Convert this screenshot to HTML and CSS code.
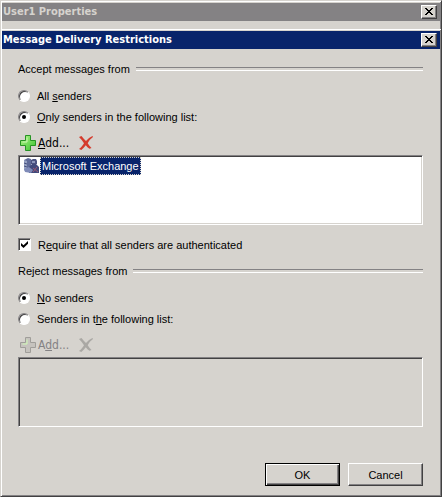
FILE: index.html
```html
<!DOCTYPE html>
<html lang="en">
<head>
    <meta charset="UTF-8">
    <meta name="viewport" content="width=device-width, initial-scale=1.0">
    <title>Message Delivery Restrictions</title>
    <link rel="stylesheet" href="styles.css">
</head>
<body>
    <!-- shared icons -->
    <svg class="icon-defs" width="0" height="0" aria-hidden="true">
        <linearGradient id="green" x1="0" y1="0" x2="1" y2="1">
            <stop offset="0" stop-color="#b4f58c"/>
            <stop offset="1" stop-color="#35c22c"/>
        </linearGradient>
        <symbol id="plus" viewBox="0 0 16 16">
            <path d="M5.5 .5h5v5h5v5h-5v5h-5v-5h-5v-5h5z" stroke-linejoin="round"/>
            <path d="M7 2.5v4.500h-4.500" class="plus-shine"/>
        </symbol>
        <symbol id="cross" viewBox="0 0 16 16">
            <path d="M1 2L3.500 1C5 3 6.500 4.500 8 6C10 3.800 12 2 14.500 1L15 2C12.500 3.800 11 5.700 9.700 8.200C10.800 10 12 11.600 13.500 13L11.500 13.800C10 12.700 8.800 11.500 7.800 10.200C6.500 12 5 13.500 3.300 15L1 14C3.300 12.200 4.800 10.300 6 8.200C4.600 6 3 4 1 2Z"/>
        </symbol>
    </svg>

    <div class="window">
        <div class="title-bar inactive">
            <span>User1 Properties</span>
            <button type="button" class="close" aria-label="Close User1 Properties">
                <svg width="8" height="7" viewBox="0 0 8 7" shape-rendering="crispEdges"><path d="M0 0h2v1h1v1h2v-1h1v-1h2v1h-1v1h-1v1h-1v1h1v1h1v1h1v1h-2v-1h-1v-1h-2v1h-1v1h-2v-1h1v-1h1v-1h1v-1h-1v-1h-1v-1h-1z"/></svg>
            </button>
        </div>
    </div>

    <form class="window dialog">
        <div class="title-bar">
            <span>Message Delivery Restrictions</span>
            <button type="button" class="close" aria-label="Close">
                <svg width="8" height="7" viewBox="0 0 8 7" shape-rendering="crispEdges"><path d="M0 0h2v1h1v1h2v-1h1v-1h2v1h-1v1h-1v1h-1v1h1v1h1v1h1v1h-2v-1h-1v-1h-2v1h-1v1h-2v-1h1v-1h1v-1h1v-1h-1v-1h-1v-1h-1z"/></svg>
            </button>
        </div>

        <div class="content">
            <fieldset>
                <legend>Accept messages from</legend>
                <label class="option"><input type="radio" name="accept"><span>All <u>s</u>enders</span></label>
                <label class="option"><input type="radio" name="accept" checked><span><u>O</u>nly senders in the following list:</span></label>
                <div class="toolbar">
                    <button type="button" class="tool add"><svg width="16" height="16"><use href="#plus"/></svg><span><u>A</u>dd...</span></button>
                    <button type="button" class="tool remove" aria-label="Remove"><svg width="16" height="16"><use href="#cross"/></svg></button>
                </div>
                <ul class="list">
                    <li>
                        <svg width="16" height="16" viewBox="0 0 16 16">
                            <path d="M1 2l4-2 3 1v11l-3 2-4-2z" fill="#5f6a98"/>
                            <path d="M1 2l3 1v10l-3-1z" fill="#98a3c3"/>
                            <path d="M1 5l3 1M1 8l3 1" stroke="#454f7d"/>
                            <path d="M8 2l2-1h3l1 2v3H8z" fill="#4a5280"/>
                            <path d="M9 3h3v2H9z" fill="#8d97bd"/>
                            <path d="M6 9l3-3h4l3 3v6H6z" fill="#414a7c"/>
                            <path d="M1 11l5-2 4 3-2 3-6-1z" fill="#7f8bb8"/>
                            <path d="M10 10l5 4M14 9l-4 5" stroke="#9a5874"/>
                        </svg>
                        <span class="selected">Microsoft Exchange</span>
                    </li>
                </ul>
            </fieldset>

            <label class="option require"><input type="checkbox" checked><span>R<u>e</u>quire that all senders are authenticated</span></label>

            <fieldset>
                <legend>Reject messages from</legend>
                <label class="option"><input type="radio" name="reject" checked><span><u>N</u>o senders</span></label>
                <label class="option"><input type="radio" name="reject"><span>Senders in t<u>h</u>e following list:</span></label>
                <div class="toolbar">
                    <button type="button" class="tool add" disabled><svg width="16" height="16"><use href="#plus"/></svg><span>A<u>d</u>d...</span></button>
                    <button type="button" class="tool remove" aria-label="Remove" disabled><svg width="16" height="16"><use href="#cross"/></svg></button>
                </div>
                <ul class="list disabled"></ul>
            </fieldset>

            <div class="buttons">
                <button type="submit" class="button default">OK</button>
                <button type="button" class="button">Cancel</button>
            </div>
        </div>
    </form>
</body>
</html>
```

FILE: styles.css
```css
* {
    box-sizing: border-box;
}
body {
    margin: 0;
    background-color: #d6d3ce;
    color: #000;
    font-family: "Liberation Sans", Arial, sans-serif;
    font-size: 11px;
    line-height: 14px;
}
button {
    font: inherit;
    color: inherit;
}
svg {
    display: block;
    flex: none;
}
.icon-defs {
    position: absolute;
}

/* windows */
.window {
    padding: 2px 1px 8px;
    border: 1px solid;
    border-color: #d6d3ce #424142 #424142 #d6d3ce;
    border-bottom: 0;
    box-shadow: inset 1px 1px #fff, inset -1px 0 #848284;
}
.dialog {
    display: flex;
    flex-direction: column;
    min-height: calc(100vh - 29px);
    padding: 2px 1px 0;
    border-top: 0;
    border-bottom: 1px solid #424142;
    box-shadow: inset 1px 1px #fff, inset -1px -1px #848284;
}
.title-bar {
    display: flex;
    align-items: center;
    justify-content: space-between;
    height: 18px;
    padding: 0 3px 0 1px;
    background-color: #08246b;
    color: #fff;
    font-family: "DejaVu Sans Condensed", "DejaVu Sans", Tahoma, sans-serif;
    font-weight: bold;
}
.title-bar.inactive {
    background-color: #848284;
    color: #d6d3ce;
}
.close {
    display: flex;
    align-items: center;
    justify-content: center;
    width: 16px;
    height: 14px;
    padding: 0 1px 1px 0;
    border: 1px solid;
    border-color: #fff #424142 #424142 #fff;
    background-color: #d6d3ce;
    box-shadow: inset -1px -1px #848284;
}

/* dialog content */
.content {
    display: flex;
    flex: 1;
    flex-direction: column;
    padding: 13px 17px 10px 16px;
}
fieldset {
    min-width: 0;
    margin: 0;
    padding: 0;
    border: 0;
}
legend {
    display: flex;
    align-items: center;
    gap: 6px;
    width: 100%;
    margin-bottom: 9px;
    padding: 0;
}
legend::after {
    content: "";
    flex: 1;
    height: 2px;
    border-top: 1px solid #848284;
    border-bottom: 1px solid #fff;
}
.option {
    display: flex;
    align-items: center;
    gap: 7px;
    height: 21px;
}
.option input {
    appearance: none;
    display: grid;
    place-items: center;
    flex: none;
    width: 12px;
    height: 12px;
    margin: 0;
    border: 1px solid;
    border-color: #848284 #fff #fff #848284;
    background-color: #fff;
    box-shadow: inset 1px 1px #424142;
}
.option input[type="radio"] {
    border-radius: 50%;
}
.option input[type="radio"]:checked::before {
    content: "";
    width: 4px;
    height: 4px;
    border-radius: 50%;
    background-color: #000;
}
.option input[type="checkbox"] {
    width: 13px;
    height: 13px;
}
.option input[type="checkbox"]:checked::before {
    content: "";
    width: 7px;
    height: 7px;
    background-color: #000;
    clip-path: polygon(0 29%, 36% 62%, 100% 0, 100% 40%, 36% 100%, 0 68%);
}
.require {
    margin: 9px 0;
}

/* add / remove */
.toolbar {
    display: flex;
    align-items: center;
    gap: 9px;
    height: 28px;
    padding: 4px 2px 0;
}
.tool {
    display: flex;
    align-items: center;
    gap: 2px;
    padding: 0;
    border: 0;
    background: none;
}
.add {
    font-family: "DejaVu Sans Condensed", "DejaVu Sans", Tahoma, sans-serif;
    font-size: 12px;
}
.add svg {
    fill: url(#green);
    stroke: #269323;
}
.plus-shine {
    fill: none;
    stroke: #d0fbb6;
}
.remove svg {
    fill: #d43b2c;
}
.tool:disabled {
    color: #848284;
}
.add:disabled svg {
    fill: #c6c3be;
    stroke: #a09e9a;
}
.add:disabled .plus-shine {
    stroke: #dedbd6;
}
.remove:disabled svg {
    fill: #aaa8a4;
}

/* sender lists */
.list {
    height: 70px;
    margin: 0;
    padding: 1px 4px;
    border: 1px solid;
    border-color: #848284 #fff #fff #848284;
    background-color: #fff;
    box-shadow: inset 1px 1px #424142, inset -1px -1px #d6d3ce;
    list-style: none;
}
.list.disabled {
    background-color: #d6d3ce;
}
.list li {
    display: flex;
    align-items: center;
    gap: 1px;
}
.selected {
    padding: 1px;
    border: 1px dotted #d6d3ce;
    background-color: #08246b;
    color: #fff;
}

/* bottom buttons */
.buttons {
    display: flex;
    justify-content: flex-end;
    gap: 8px;
    margin-top: auto;
}
.button {
    width: 75px;
    height: 23px;
    padding: 0;
    border: 1px solid;
    border-color: #fff #424142 #424142 #fff;
    background-color: #d6d3ce;
    box-shadow: inset -1px -1px #848284;
}
.button.default {
    border-color: #000;
    box-shadow: inset 1px 1px #fff, inset -1px -1px #424142, inset -2px -2px #848284;
}
```
